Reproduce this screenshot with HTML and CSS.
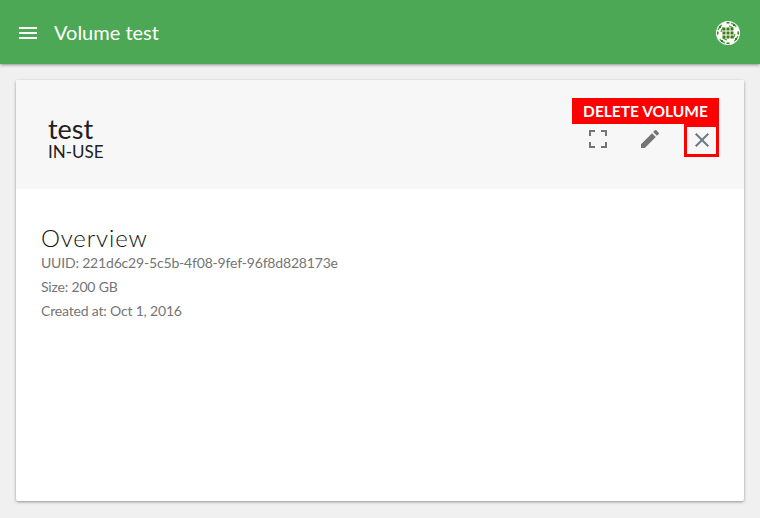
FILE: index.html
```html
<!DOCTYPE html>
<html lang="en">
<head>
<meta charset="utf-8">
<title>Volume test</title>
<link rel="stylesheet" href="styles.css">
</head>
<body>
<header class="topbar">
  <svg class="menu-icon" width="18" height="12" viewBox="0 0 18 12"><path d="M0 0h18v2H0zM0 5h18v2H0zM0 10h18v2H0z" fill="#fff"/></svg>
  <h1 class="topbar-title">Volume test</h1>
  <svg class="avatar" width="24" height="24" viewBox="0 0 24 24">
    <defs>
      <g id="hook">
        <path d="M15 1.500c2.500.6 4.500 2 5.800 4l-1.200.8c-1-1.600-2.800-2.800-4.800-3.400zM13 4.500c1.800.2 3.300 1 4.400 2.200l-1 1c-.9-1-2-1.700-3.400-1.900z" fill="#4ca854"/>
        <rect x="21.500" y="10.500" width="1.500" height="3" fill="#3f7d12"/>
        <rect x="17" y="3" width="2" height="2" fill="#3f7d12"/>
      </g>
    </defs>
    <circle cx="12" cy="12" r="12" fill="#fff"/>
    <use href="#hook"/>
    <use href="#hook" transform="rotate(90 12 12)"/>
    <use href="#hook" transform="rotate(180 12 12)"/>
    <use href="#hook" transform="rotate(270 12 12)"/>
    <g fill="#3f7d12">
      <rect x="6.500" y="6.500" width="3" height="3"/><rect x="10.500" y="6.500" width="3" height="3"/><rect x="14.500" y="6.500" width="3" height="3"/>
      <rect x="6.500" y="10.500" width="3" height="3"/><rect x="10.500" y="10.500" width="3" height="3"/><rect x="14.500" y="10.500" width="3" height="3"/>
      <rect x="6.500" y="14.500" width="3" height="3"/><rect x="10.500" y="14.500" width="3" height="3"/><rect x="14.500" y="14.500" width="3" height="3"/>
    </g>
  </svg>
</header>
<main class="page">
  <section class="card">
    <div class="card-head">
      <div class="head-text">
        <h2 class="volume-name">test</h2>
        <div class="volume-state">IN-USE</div>
      </div>
      <div class="actions">
        <button class="action" type="button" aria-label="Fullscreen">
          <svg width="24" height="24" viewBox="0 0 24 24"><path d="M3 3h6v2H5v4H3zM15 3h6v6h-2V5h-4zM3 15h2v4h4v2H3zM19 15h2v6h-6v-2h4z" fill="#757575"/></svg>
        </button>
        <button class="action" type="button" aria-label="Edit">
          <svg width="24" height="24" viewBox="0 0 24 24"><path d="M3 17.250V21h3.750L17.810 9.940l-3.750-3.750L3 17.250zM20.710 7.040a1 1 0 0 0 0-1.410l-2.340-2.340a1 1 0 0 0-1.410 0l-1.830 1.830 3.750 3.750 1.830-1.830z" fill="#757575"/></svg>
        </button>
        <div class="delete-wrap">
          <div class="delete-label">DELETE VOLUME</div>
          <button class="action action-delete" type="button" aria-label="Delete volume">
            <svg width="24" height="24" viewBox="0 0 24 24"><path d="M19 6.410 17.590 5 12 10.590 6.410 5 5 6.410 10.590 12 5 17.590 6.410 19 12 13.410 17.590 19 19 17.590 13.410 12z" fill="#6f7a86"/></svg>
          </button>
        </div>
      </div>
    </div>
    <div class="card-body">
      <h3 class="section-title">Overview</h3>
      <p class="info">UUID: 221d6c29-5c5b-4f08-9fef-96f8d828173e</p>
      <p class="info">Size: 200 GB</p>
      <p class="info">Created at: Oct 1, 2016</p>
    </div>
  </section>
</main>
</body>
</html>
```
FILE: styles.css
```css
* { box-sizing: border-box; }
html, body { margin: 0; height: 100%; }
body {
  background: #f0f0f0;
  font-family: Lato, "Open Sans", sans-serif;
  color: #212121;
  overflow: hidden;
}
.topbar {
  height: 64px;
  background: #4ca854;
  display: flex;
  align-items: center;
  padding: 2px 20px 0 19px;
  box-shadow: 0 1px 3px rgba(0,0,0,.4);
  position: relative;
}
.menu-icon { flex: none; }
.topbar-title {
  margin: 0 0 3px 17px;
  flex: 1;
  color: #fff;
  font-size: 20px;
  font-weight: 400;
}
.avatar { flex: none; }
.page { padding: 16px; }
.card {
  height: 421px;
  background: #fff;
  border-radius: 2px;
  box-shadow: 0 1px 3px rgba(0,0,0,.4);
  overflow: hidden;
}
.card-head {
  height: 109px;
  background: #f7f7f7;
  display: flex;
  justify-content: space-between;
  padding: 36px 25px 0 32px;
}
.volume-name {
  margin: 0;
  font-size: 27px;
  font-weight: 400;
  line-height: 26px;
}
.volume-state {
  font-size: 17px;
  line-height: 20px;
}
.actions {
  display: flex;
  align-items: flex-start;
  gap: 17px;
  margin-top: 8px;
}
.action {
  width: 35px;
  height: 33px;
  padding: 0 0 3px;
  background: none;
  border: 0;
  display: flex;
  align-items: center;
  justify-content: center;
}
.delete-wrap {
  position: relative;
}
.action-delete { border: 3px solid #f00; padding: 0 0 1px; }
.delete-label {
  position: absolute;
  right: 0;
  bottom: 100%;
  height: 26px;
  width: 147px;
  background: #f00;
  color: #fff;
  font-size: 15.5px;
  font-weight: 700;
  line-height: 26px;
  text-align: center;
  white-space: nowrap;
}
.card-body { padding: 35px 25px; }
.section-title {
  margin: 0;
  font-size: 24px;
  font-weight: 300;
  line-height: 27px;
  letter-spacing: .85px;
  color: #111;
}
.info {
  margin: 0;
  font-size: 14px;
  line-height: 24px;
  letter-spacing: -.18px;
  color: #757575;
}
```
